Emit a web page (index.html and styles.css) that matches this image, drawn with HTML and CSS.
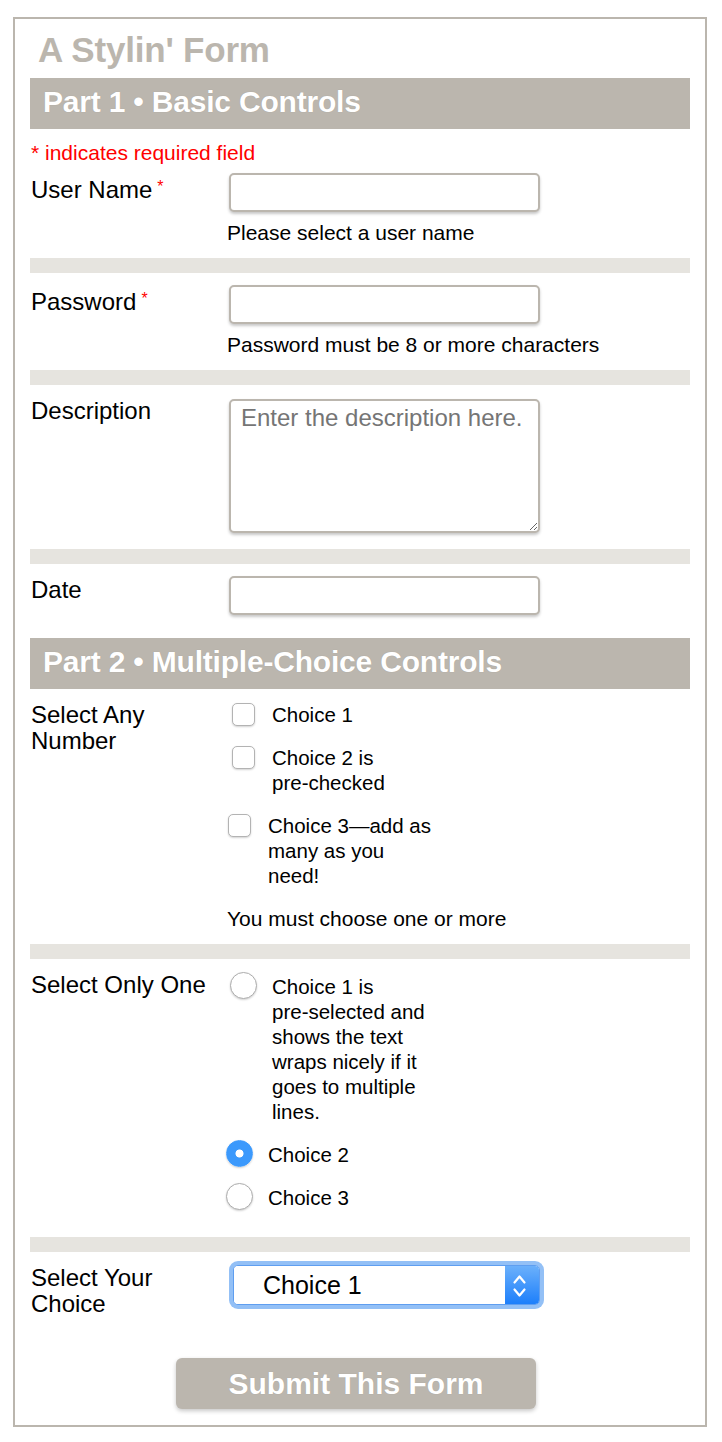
FILE: index.html
```html
<!DOCTYPE html>
<html lang="en">
<head>
<meta charset="utf-8">
<title>A Stylin' Form</title>
<link rel="stylesheet" href="styles.css">
</head>
<body>
<div class="page">
  <form class="form">
    <h1 class="title">A Stylin' Form</h1>
    <h2 class="section-head">Part 1 • Basic Controls</h2>
    <p class="req-note">* indicates required field</p>

    <div class="row row-first">
      <label class="label" for="user">User Name<span class="req">*</span></label>
      <div class="control">
        <input class="text-input" id="user" type="text">
        <p class="hint">Please select a user name</p>
      </div>
    </div>
    <div class="divider"></div>

    <div class="row">
      <label class="label" for="pw">Password<span class="req">*</span></label>
      <div class="control">
        <input class="text-input" id="pw" type="password">
        <p class="hint">Password must be 8 or more characters</p>
      </div>
    </div>
    <div class="divider"></div>

    <div class="row">
      <label class="label" for="desc">Description</label>
      <div class="control">
        <textarea class="text-area" id="desc" placeholder="Enter the description here."></textarea>
      </div>
    </div>
    <div class="divider"></div>

    <div class="row">
      <label class="label" for="date">Date</label>
      <div class="control">
        <input class="text-input" id="date" type="text">
      </div>
    </div>

    <h2 class="section-head section-head-2">Part 2 • Multiple-Choice Controls</h2>

    <div class="row">
      <div class="label">Select Any Number</div>
      <div class="control">
        <div class="choices choices-check">
          <label class="choice"><input class="check" type="checkbox"><span class="choice-text">Choice 1</span></label>
          <label class="choice"><input class="check" type="checkbox"><span class="choice-text">Choice 2 is pre-&#8288;checked</span></label>
          <label class="choice choice-shift"><input class="check" type="checkbox"><span class="choice-text">Choice 3—add as many as you need!</span></label>
        </div>
        <p class="hint hint-choices">You must choose one or more</p>
      </div>
    </div>
    <div class="divider"></div>

    <div class="row row-radio">
      <div class="label">Select Only One</div>
      <div class="control">
        <div class="choices choices-radio">
          <label class="choice"><input class="radio" type="radio" name="one"><span class="choice-text">Choice 1 is pre-&#8288;selected and shows the text wraps nicely if it goes to multiple lines.</span></label>
          <label class="choice choice-shift"><input class="radio" type="radio" name="one" checked><span class="choice-text">Choice 2</span></label>
          <label class="choice choice-shift"><input class="radio" type="radio" name="one"><span class="choice-text">Choice 3</span></label>
        </div>
      </div>
    </div>
    <div class="divider"></div>

    <div class="row">
      <label class="label" for="pick">Select Your Choice</label>
      <div class="control">
        <div class="select-wrap">
          <select class="select" id="pick">
            <option>Choice 1</option>
            <option>Choice 2</option>
            <option>Choice 3</option>
          </select>
          <span class="select-arrow">
            <svg width="34" height="40" viewBox="0 0 34 40" aria-hidden="true">
              <path d="M9.5 16.5 L14.5 10.5 L19.5 16.5" fill="none" stroke="#fff" stroke-width="2.2" stroke-linecap="round" stroke-linejoin="round"/>
              <path d="M9.5 23.5 L14.5 29.5 L19.5 23.5" fill="none" stroke="#fff" stroke-width="2.2" stroke-linecap="round" stroke-linejoin="round"/>
            </svg>
          </span>
        </div>
      </div>
    </div>

    <div class="submit-row">
      <button class="submit" type="button">Submit This Form</button>
    </div>
  </form>
</div>
</body>
</html>
```

FILE: styles.css
```css
* {
  box-sizing: border-box;
}

body {
  margin: 0;
  background: #fff;
  color: #000;
  font-family: "Liberation Sans", Arial, Helvetica, sans-serif;
}

.page {
  margin: 17px 15px 0 13px;
  border: 2px solid #bbb6ae;
  padding: 0 15px 16px;
}

.form {
  margin: 0;
}

.title {
  margin: 11px 0 8px;
  padding-left: 8px;
  font-size: 35px;
  line-height: 40px;
  font-weight: bold;
  color: #bbb6ae;
  letter-spacing: -0.2px;
}

.section-head {
  margin: 0;
  padding: 0 0 4px 13px;
  background: #bbb6ae;
  color: #fff;
  font-size: 30px;
  line-height: 47px;
  font-weight: bold;
  letter-spacing: -0.2px;
  text-shadow: 0 0 1px rgba(0, 0, 0, 0.15);
}

.section-head-2 {
  margin-top: 10px;
}

.req-note {
  margin: 11px 0 0 1px;
  color: #f00;
  font-size: 21px;
  line-height: 25px;
}

.row {
  display: flex;
  padding: 12px 0 13px;
}

.row-first {
  padding-top: 8px;
}

.row-radio {
  padding-bottom: 9px;
}

.label {
  flex: none;
  width: 197px;
  padding: 1px 0 0 1px;
  font-size: 24px;
  line-height: 26px;
}

.req {
  color: #f00;
  font-size: 16px;
  vertical-align: 6px;
  margin-left: 5px;
}

.control {
  flex: 1;
  min-width: 0;
}

.text-input {
  display: block;
  margin: 0 0 0 2px;
  width: 311px;
  height: 39px;
  padding: 0 10px;
  border: 2px solid #bbb6ae;
  border-radius: 5px;
  background: #fff;
  box-shadow: 0 2px 3px rgba(0, 0, 0, 0.22);
  font-family: inherit;
  font-size: 21px;
  outline: none;
}

.text-area {
  display: block;
  margin: 2px 0 3px 2px;
  width: 311px;
  height: 134px;
  padding: 3px 10px;
  border: 2px solid #bbb6ae;
  border-radius: 5px;
  background: #fff;
  box-shadow: 0 2px 3px rgba(0, 0, 0, 0.22);
  font-family: inherit;
  font-size: 24px;
  line-height: 28px;
  outline: none;
}

.text-area::placeholder {
  color: #757575;
}

.hint {
  margin: 8px 0 0;
  font-size: 21px;
  line-height: 25px;
}

.hint-choices {
  margin-top: 2px;
}

.divider {
  height: 15px;
  background: #e6e4df;
}

.choices {
  display: flex;
  flex-direction: column;
  gap: 18px;
  margin-bottom: 18px;
}

.choices-check {
  padding-top: 1px;
}

.choices-radio {
  padding-top: 3px;
}

.choice {
  display: flex;
  align-items: flex-start;
  font-size: 20.5px;
  line-height: 25px;
}

.choice-text {
  width: 170px;
}

.check {
  appearance: none;
  -webkit-appearance: none;
  flex: none;
  width: 23px;
  height: 23px;
  margin: 1px 17px 0 5px;
  border: 1px solid #b3b3b3;
  border-radius: 5px;
  background: #fff;
  box-shadow: 0 1px 2px rgba(0, 0, 0, 0.18);
}

.choice-shift .check {
  margin-left: 1px;
}

.radio {
  appearance: none;
  -webkit-appearance: none;
  flex: none;
  width: 27px;
  height: 27px;
  margin: -2px 15px 0 3px;
  border: 1px solid #adadad;
  border-radius: 50%;
  background: #fff;
  box-shadow: 0 1px 2px rgba(0, 0, 0, 0.18);
}

.choice-shift .radio {
  margin-left: -1px;
}

.radio:checked {
  border-color: #3b99fc;
  background: radial-gradient(circle, #fff 0 3.6px, #3b99fc 4.4px);
}

.select-wrap {
  display: flex;
  width: 307px;
  height: 40px;
  margin: 1px 0 0 6px;
  border: 1px solid #5f9ef0;
  border-radius: 5px;
  background: #fff;
  box-shadow: 0 0 0 4px #93c0f6;
  overflow: hidden;
}

.select {
  appearance: none;
  -webkit-appearance: none;
  flex: 1;
  min-width: 0;
  margin: 0;
  padding: 0 0 0 29px;
  border: none;
  background: #fff;
  font-family: inherit;
  font-size: 25px;
  color: #000;
  outline: none;
}

.select-arrow {
  display: flex;
  flex: none;
  width: 34px;
  background: linear-gradient(#6bb0fb, #1d7ffb);
}

.submit-row {
  display: flex;
  justify-content: center;
  padding-right: 8px;
  margin-top: 28px;
}

.submit {
  width: 360px;
  height: 51px;
  padding: 0;
  border: none;
  border-radius: 6px;
  background: #bbb6ae;
  color: #fff;
  font-family: inherit;
  font-size: 30px;
  font-weight: bold;
  box-shadow: 0 2px 4px rgba(0, 0, 0, 0.22);
  text-shadow: 0 0 1px rgba(0, 0, 0, 0.15);
}
```
